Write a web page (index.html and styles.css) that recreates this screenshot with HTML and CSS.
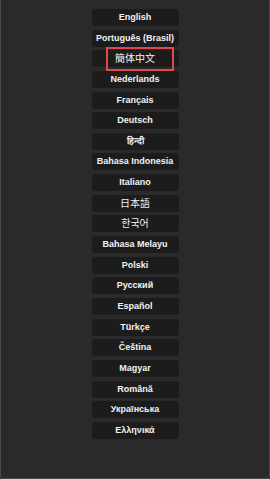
FILE: index.html
```html
<!DOCTYPE html>
<html lang="en">
<head>
    <meta charset="UTF-8" />
    <meta name="viewport" content="width=device-width, initial-scale=1.0" />
    <title>Language</title>
    <link rel="stylesheet" href="styles.css">
</head>
<body>
    <div class="panel">
        <div class="lang-list">
            <div class="lang">English</div>
            <div class="lang">Português (Brasil)</div>
            <div class="lang current cjk">簡体中文</div>
            <div class="lang">Nederlands</div>
            <div class="lang">Français</div>
            <div class="lang">Deutsch</div>
            <div class="lang">हिन्दी</div>
            <div class="lang">Bahasa Indonesia</div>
            <div class="lang">Italiano</div>
            <div class="lang cjk">日本語</div>
            <div class="lang cjk">한국어</div>
            <div class="lang">Bahasa Melayu</div>
            <div class="lang">Polski</div>
            <div class="lang">Русский</div>
            <div class="lang">Español</div>
            <div class="lang">Türkçe</div>
            <div class="lang">Čeština</div>
            <div class="lang">Magyar</div>
            <div class="lang">Română</div>
            <div class="lang">Українська</div>
            <div class="lang">Ελληνικά</div>
        </div>
    </div>
</body>
</html>
```

FILE: styles.css
```css
/* page */
body {
    margin: 0;
    padding: 0;
    background-color: #2a2a2a;
    font-family: "Liberation Sans", Arial, "Noto Sans CJK SC", sans-serif;
}

.panel {
    height: 479px;
    box-sizing: border-box;
    background-color: #2a2a2a;
    border: 1px solid #4a4a4a;
    border-top: none;
    border-radius: 0 0 3px 3px;
    padding-top: 9px;
}

/* language buttons */
.lang-list {
    display: flex;
    flex-direction: column;
    align-items: center;
    gap: 3.65px;
}

.lang {
    position: relative;
    width: 87px;
    height: 17px;
    line-height: 17px;
    background-color: #1c1c1c;
    border-radius: 3px;
    color: #f2f2f2;
    font-size: 9px;
    font-weight: bold;
    text-align: center;
    white-space: nowrap;
}

.cjk {
    font-size: 10px;
    font-weight: normal;
}

/* red frame around the selected one */
.current::after {
    content: "";
    position: absolute;
    left: 14px;
    right: 5px;
    top: -3px;
    bottom: -4px;
    border: 2px solid #e0484a;
}
```
